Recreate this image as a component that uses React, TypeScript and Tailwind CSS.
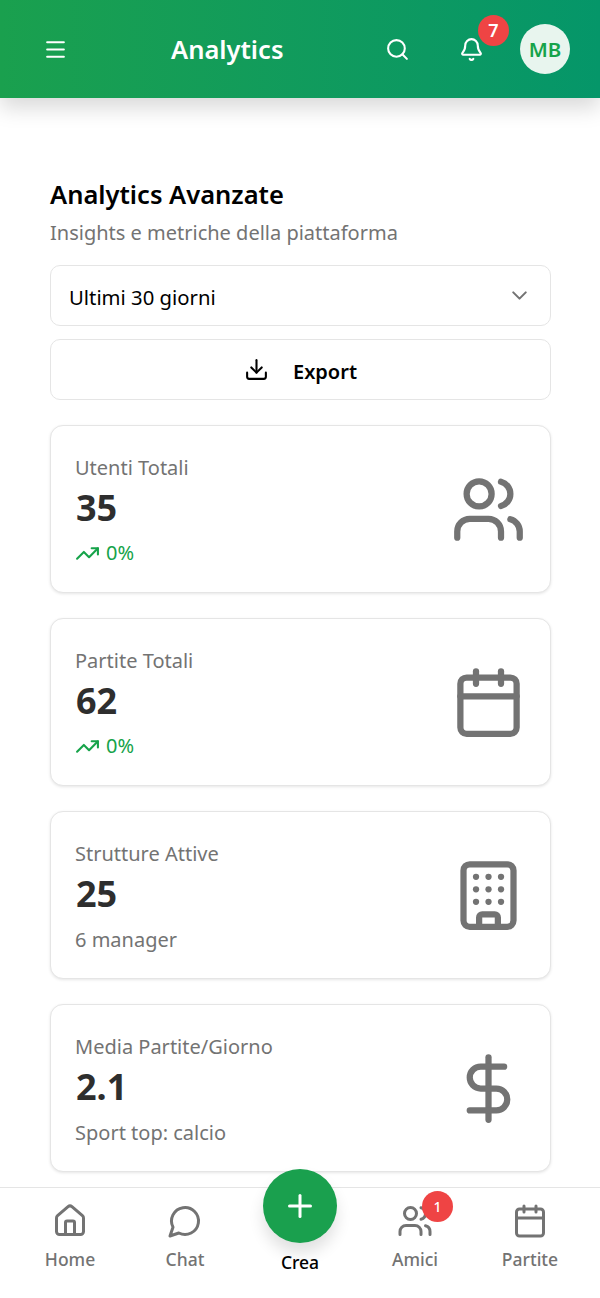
import { Menu, Search, Bell, ChevronDown, Download, Users, Calendar, Building, DollarSign, TrendingUp, Home, Plus } from "lucide-react";

type Stat = { label: string; value: string; sub: string; trend?: boolean; icon: React.ReactNode };

const iconCls = "w-[75px] h-[75px] text-[#737373] shrink-0";
const stats: Stat[] = [
  { label: "Utenti Totali", value: "35", sub: "0%", trend: true, icon: <Users className={iconCls} /> },
  { label: "Partite Totali", value: "62", sub: "0%", trend: true, icon: <Calendar className={iconCls} /> },
  { label: "Strutture Attive", value: "25", sub: "6 manager", icon: <Building className={iconCls} /> },
  { label: "Media Partite/Giorno", value: "2.1", sub: "Sport top: calcio", icon: <DollarSign className={iconCls} /> },
];

function StatCard({ s }: { s: Stat }) {
  return (
    <div className="h-[168px] rounded-[13px] border border-[#e5e5e5] bg-white shadow-[0_1px_3px_rgba(0,0,0,0.1)] px-[24px] flex items-center justify-between">
      <div className="flex flex-col pt-[3px]">
        <div className="text-[20px] leading-[30px] text-[#737373]">{s.label}</div>
        <div className="text-[36px] leading-[45px] font-bold text-[#2e2e2e] mt-[2px] ml-[1px]">{s.value}</div>
        {s.trend ? (
          <div className="flex items-center gap-[6px] text-[20px] leading-[30px] text-[#16a34a] mt-[8px]">
            <TrendingUp className="w-[25px] h-[25px]" />
            <span>{s.sub}</span>
          </div>
        ) : (
          <div className="text-[20px] leading-[30px] text-[#737373] mt-[8px] pt-[1px]">{s.sub}</div>
        )}
      </div>
      {s.icon}
    </div>
  );
}

function NavItem({ label, icon }: { label: string; icon: React.ReactNode }) {
  return (
    <div className="flex flex-col items-center w-[115px] pt-[15px]">
      <div className="relative h-[36px] w-[36px]">{icon}</div>
      <div className="text-[17.5px] leading-[26px] font-medium text-[#737373] mt-[7px]">{label}</div>
    </div>
  );
}

export default function App() {
  const navIcon = "w-[36px] h-[36px] text-[#737373]";
  return (
    <div className="relative w-[600px] h-[1298px] overflow-hidden bg-white flex flex-col text-black" style={{ fontFamily: '"Noto Sans", sans-serif' }}>
      <header className="relative z-10 h-[98px] shrink-0 bg-gradient-to-r from-[#1aa04e] to-[#059669] shadow-[0_10px_20px_rgba(0,0,0,0.15)] flex items-center text-white pl-[43px] pr-[30px]">
        <Menu className="w-[25px] h-[25px]" />
        <div className="ml-[103px] text-[25.5px] font-semibold">Analytics</div>
        <Search className="w-[25px] h-[25px] ml-auto" />
        <div className="relative ml-[49px]">
          <Bell className="w-[25px] h-[25px]" />
          <div className="absolute -top-[22px] left-[19px] w-[31px] h-[31px] rounded-full bg-[#ef4444] flex items-center justify-center text-[18px] font-semibold">7</div>
        </div>
        <div className="ml-[36px] w-[50px] h-[50px] rounded-full bg-[#e8f5ee] text-[#16a34a] flex items-center justify-center text-[20.5px] font-semibold">MB</div>
      </header>

      <main className="flex-1 pl-[50px] pr-[49px] pt-[78px]">
        <h1 className="text-[25.5px] leading-[36px] font-semibold">Analytics Avanzate</h1>
        <p className="text-[20px] leading-[30px] text-[#737373] mt-[6px]">Insights e metriche della piattaforma</p>

        <div className="mt-[17px] h-[61px] rounded-[10px] border border-[#e5e5e5] flex items-center justify-between pl-[18px] pr-[18px]">
          <span className="text-[20.3px] pt-[4px]">Ultimi 30 giorni</span>
          <ChevronDown className="w-[25px] h-[25px] text-[#737373]" />
        </div>
        <div className="mt-[13px] h-[61px] rounded-[10px] border border-[#e5e5e5] flex items-center justify-center gap-[24px] font-semibold text-[20px]">
          <Download className="w-[25px] h-[25px]" />
          <span className="pt-[4px]">Export</span>
        </div>

        <div className="mt-[25px] flex flex-col gap-[25px]">
          {stats.map((s) => <StatCard key={s.label} s={s} />)}
        </div>
      </main>

      <nav className="absolute z-20 left-0 right-0 bottom-0 h-[111px] bg-white border-t border-[#e5e5e5] flex justify-center">
        <NavItem label="Home" icon={<Home className={navIcon} />} />
        <NavItem label="Chat" icon={
          <svg viewBox="0 0 24 24" fill="none" stroke="currentColor" strokeWidth="2" strokeLinecap="round" strokeLinejoin="round" className={navIcon}>
            <path d="M7.9 20A9 9 0 1 0 4 16.1L2 22Z" />
          </svg>
        } />
        <div className="w-[115px] flex flex-col items-center">
          <div className="mt-[-19px] w-[74px] h-[74px] rounded-full bg-[#1aa04e] shadow-[0_10px_15px_rgba(0,0,0,0.12)] flex items-center justify-center text-white">
            <Plus className="w-[36px] h-[36px]" />
          </div>
          <div className="text-[17.5px] leading-[26px] font-medium text-black mt-[6px]">Crea</div>
        </div>
        <NavItem label="Amici" icon={
          <>
            <Users className={navIcon} />
            <div className="absolute -top-[12px] left-[25px] w-[31px] h-[31px] rounded-full bg-[#ef4444] text-white flex items-center justify-center text-[14px] font-medium">1</div>
          </>
        } />
        <NavItem label="Partite" icon={<Calendar className={navIcon} />} />
      </nav>
    </div>
  );
}
